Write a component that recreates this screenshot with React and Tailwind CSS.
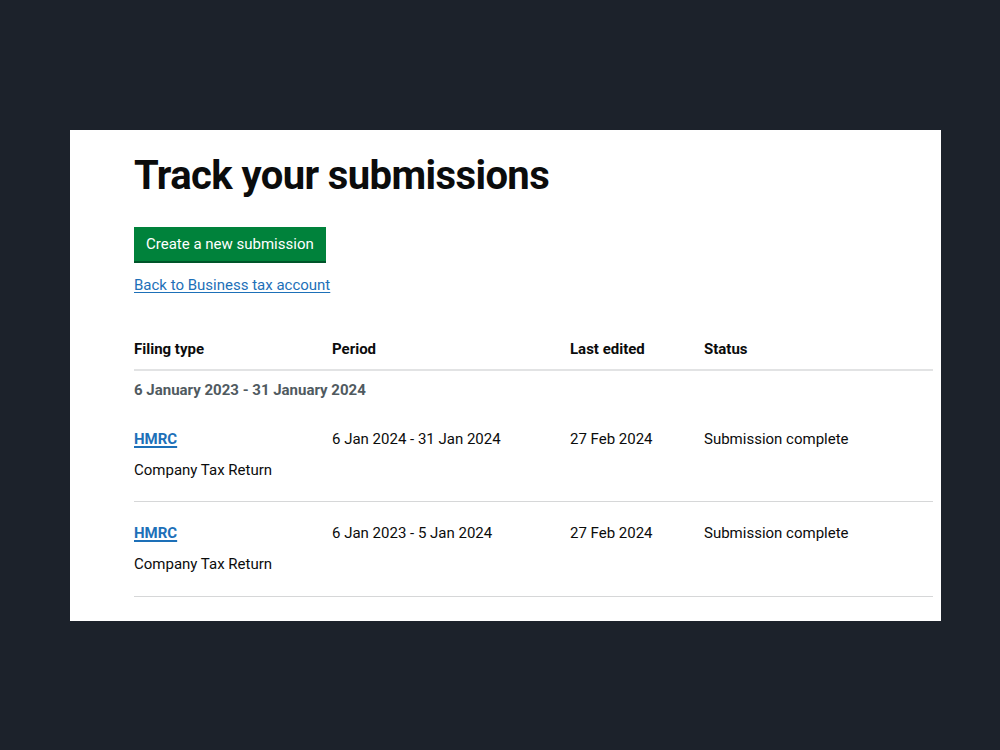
import React from "react";

const rows = [
  { period: "6 Jan 2024 - 31 Jan 2024", edited: "27 Feb 2024", status: "Submission complete" },
  { period: "6 Jan 2023 - 5 Jan 2024", edited: "27 Feb 2024", status: "Submission complete" },
];

export default function App() {
  return (
    <div
      className="min-h-[750px] w-[1000px] bg-[#1c222b] pt-[130px] pl-[70px] text-[#0b0c0c]"
      style={{ fontFamily: "Roboto, 'Liberation Sans', sans-serif" }}
    >
      <div className="w-[871px] h-[491px] bg-white pl-[64px] pr-[8px] pt-[22px]">
        <h1 className="text-[40px] font-bold leading-[48px] tracking-[-0.6px]">Track your submissions</h1>

        <button className="mt-[27px] h-[34px] px-[12px] bg-[#00823b] text-white text-[15px] shadow-[0_2px_0_#00552a]">
          Create a new submission
        </button>

        <div className="mt-[12px]">
          <a href="#" className="text-[15px] text-[#1d70b8] underline underline-offset-2">
            Back to Business tax account
          </a>
        </div>

        <table className="mt-[41px] w-full text-[15px] border-collapse">
          <thead>
            <tr className="border-b-2 border-[#e2e3e4] text-left">
              <th className="w-[198px] pb-[8px] font-bold">Filing type</th>
              <th className="w-[238px] pb-[8px] font-bold">Period</th>
              <th className="w-[134px] pb-[8px] font-bold">Last edited</th>
              <th className="pb-[8px] font-bold">Status</th>
            </tr>
          </thead>
          <tbody>
            <tr>
              <td colSpan={4} className="pt-[8px] pb-[27px] font-bold text-[#505a5f]">
                6 January 2023 - 31 January 2024
              </td>
            </tr>
            {rows.map((r, i) => (
              <tr key={i} className="border-b border-[#d6d7d8] align-top">
                <td className={i === 0 ? "pb-[20px]" : "pt-[20px] pb-[21px]"}>
                  <a href="#" className="font-bold text-[#1d70b8] underline decoration-2 underline-offset-2">HMRC</a>
                  <div className="mt-[8px]">Company Tax Return</div>
                </td>
                <td className={i === 0 ? "" : "pt-[20px]"}>{r.period}</td>
                <td className={i === 0 ? "" : "pt-[20px]"}>{r.edited}</td>
                <td className={i === 0 ? "" : "pt-[20px]"}>{r.status}</td>
              </tr>
            ))}
          </tbody>
        </table>
      </div>
    </div>
  );
}
